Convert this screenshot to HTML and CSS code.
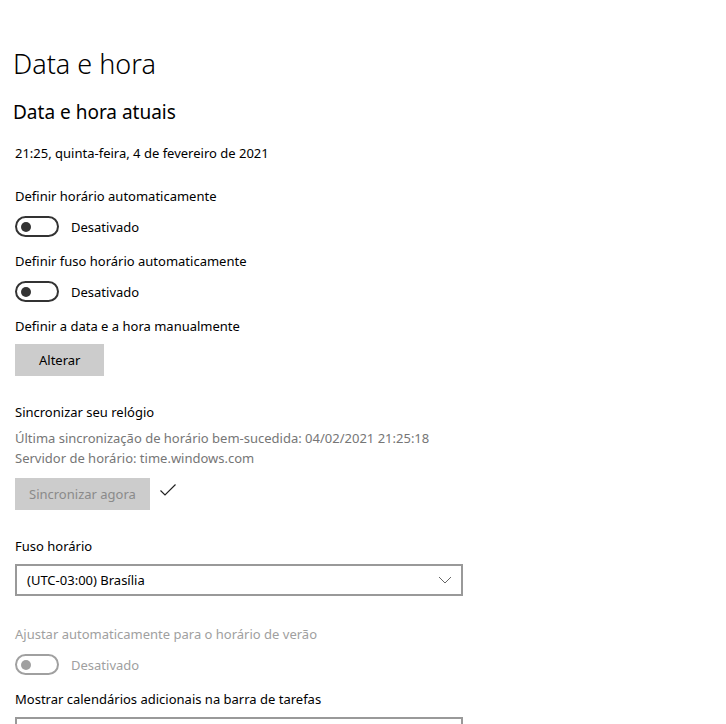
FILE: index.html
```html
<!DOCTYPE html>
<html lang="pt-BR">
<head>
  <meta charset="UTF-8">
  <title>Data e hora</title>
  <link rel="stylesheet" href="styles.css">
</head>
<body>
  <div class="page">
    <h1>Data e hora</h1>
    <h2>Data e hora atuais</h2>
    <p class="now">21:25, quinta-feira, 4 de fevereiro de 2021</p>

    <div class="setting first">
      <p class="label">Definir horário automaticamente</p>
      <div class="toggle-row">
        <span class="toggle"><span class="knob"></span></span>
        <span>Desativado</span>
      </div>
    </div>

    <div class="setting">
      <p class="label">Definir fuso horário automaticamente</p>
      <div class="toggle-row">
        <span class="toggle"><span class="knob"></span></span>
        <span>Desativado</span>
      </div>
    </div>

    <div class="setting">
      <p class="label tight">Definir a data e a hora manualmente</p>
      <button class="btn">Alterar</button>
    </div>

    <div class="setting sync">
      <p class="label">Sincronizar seu relógio</p>
      <p class="muted">Última sincronização de horário bem-sucedida: 04/02/2021 21:25:18</p>
      <p class="muted">Servidor de horário: time.windows.com</p>
      <div class="btn-row">
        <button class="btn disabled">Sincronizar agora</button>
        <svg class="check" width="18" height="14" viewBox="0 0 18 14"><path d="M1.5 7.5 L6 12 L16.5 1.5" fill="none" stroke="#222" stroke-width="1.2"/></svg>
      </div>
    </div>

    <div class="setting zone">
      <p class="label tight">Fuso horário</p>
      <div class="select">
        <span>(UTC-03:00) Brasília</span>
        <svg width="14" height="8" viewBox="0 0 14 8"><path d="M1 1 L7 7 L13 1" fill="none" stroke="#666" stroke-width="1"/></svg>
      </div>
    </div>

    <div class="setting off">
      <p class="label">Ajustar automaticamente para o horário de verão</p>
      <div class="toggle-row">
        <span class="toggle"><span class="knob"></span></span>
        <span>Desativado</span>
      </div>
    </div>

    <div class="setting">
      <p class="label tight">Mostrar calendários adicionais na barra de tarefas</p>
      <div class="select"></div>
    </div>
  </div>
</body>
</html>
```

FILE: styles.css
```css
body { margin: 0; background: #fff; color: #000; font-family: "Noto Sans", "Open Sans", sans-serif; font-size: 13px; line-height: 20px; overflow: hidden; }
.page { padding: 44px 0 0 15px; }
p { margin: 0; }
h1 { margin: 0 0 0 -2px; font-size: 27px; font-weight: 300; line-height: 40px; }
h2 { margin: 14px 0 0 -2px; font-size: 19px; font-weight: 400; line-height: 28px; }
.now { margin-top: 17px; }
.setting { margin-top: 14px; }
.setting.first { margin-top: 23px; }
.label { margin-bottom: 10px; }
.label.tight { margin-bottom: 8px; }
.toggle-row { display: flex; align-items: center; gap: 12px; height: 21px; }
.toggle { box-sizing: border-box; width: 44px; height: 21px; border: 2px solid #333; border-radius: 11px; display: flex; align-items: center; padding-left: 4px; }
.knob { width: 10px; height: 10px; border-radius: 50%; background: #333; }
.off { color: #a0a0a0; }
.off .toggle { border-color: #a0a0a0; }
.off .knob { background: #a0a0a0; }
.btn { font: inherit; border: none; background: #ccc; color: #000; height: 32px; padding: 0 24px; }
.btn.disabled { color: #8a8a8a; padding: 0 14px; }
.setting.sync { margin-top: 26px; }
.sync .label { margin-bottom: 6px; }
.muted { color: #767676; }
.btn-row { display: flex; align-items: center; gap: 9px; margin-top: 10px; }
.check { margin-top: -9px; }
.setting.zone { margin-top: 26px; }
.select { box-sizing: border-box; width: 448px; height: 32px; border: 2px solid #999; display: flex; align-items: center; justify-content: space-between; padding: 0 9px 0 10px; }
.setting.off { margin-top: 28px; }
```
